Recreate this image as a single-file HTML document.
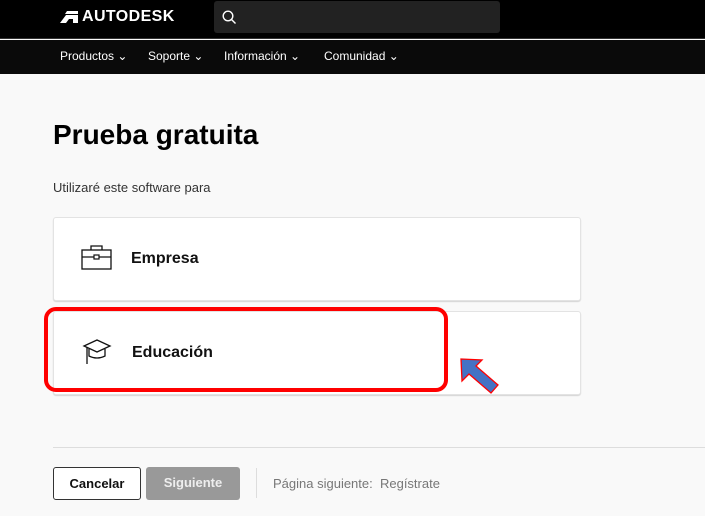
<!DOCTYPE html>
<html><head><meta charset="utf-8"><style>
*{margin:0;padding:0;box-sizing:border-box}
body{width:705px;height:516px;overflow:hidden;background:#f9f9f9;font-family:"Liberation Sans","DejaVu Sans",sans-serif;position:relative}
.top{position:absolute;left:0;top:0;width:705px;height:39px;background:#000;border-bottom:1px solid #333}
.nav{position:absolute;left:0;top:40px;width:705px;height:34px;background:#0a0a0a}
.nav span{position:absolute;top:9px;color:#fff;font-size:12px}
.search{position:absolute;left:214px;top:1px;width:286px;height:32px;background:#222;border-radius:3px}
.card{position:absolute;left:53px;width:528px;height:84px;background:#fff;border:1px solid #e3e3e3;border-radius:3px;box-shadow:0 1px 1px rgba(0,0,0,.15)}
.card span{position:absolute;left:77px;top:32px;font-size:16px;font-weight:bold;color:#111}
.btn{position:absolute;top:467px;height:33px;border-radius:3px;font-size:13px;font-weight:bold;text-align:center;line-height:31px}
</style></head><body>
<div class="top">
<svg style="position:absolute;left:60px;top:11px" width="18" height="12" viewBox="0 0 18 12"><path d="M0 12 L6 4 L18 4 L18 12 L13 12 L13 8 L9 8 L6 12Z M7 0 L18 0 L18 3 L5 3Z" fill="#fff"/></svg>
<div style="position:absolute;left:82px;top:8px;color:#fff;font-weight:bold;font-size:16px;letter-spacing:0.4px">AUTODESK</div>
<div class="search"><svg style="position:absolute;left:8px;top:9px" width="15" height="15" viewBox="0 0 15 15"><circle cx="6" cy="6" r="4.8" fill="none" stroke="#fff" stroke-width="1.4"/><path d="M9.5 9.5 L13.5 13.5" stroke="#fff" stroke-width="1.4"/></svg></div>
</div>
<div class="nav">
<span style="left:60px">Productos ⌄</span>
<span style="left:148px">Soporte ⌄</span>
<span style="left:224px">Información ⌄</span>
<span style="left:324px">Comunidad ⌄</span>
</div>
<div style="position:absolute;left:53px;top:119px;font-size:28px;font-weight:bold;color:#000">Prueba gratuita</div>
<div style="position:absolute;left:53px;top:180px;font-size:13px;color:#333">Utilizaré este software para</div>
<div class="card" style="top:217px">
<svg style="position:absolute;left:27px;top:27px" width="32" height="26" viewBox="0 0 32 26"><rect x="1" y="5" width="29" height="19" fill="none" stroke="#111" stroke-width="1.3"/><path d="M10 5 V1 H21 V5 M1 12 H30" fill="none" stroke="#111" stroke-width="1.3"/><rect x="13" y="10" width="5" height="4" fill="#fff" stroke="#111" stroke-width="1.2"/></svg>
<span>Empresa</span></div>
<div class="card" style="top:311px">
<svg style="position:absolute;left:28px;top:26px" width="32" height="28" viewBox="0 0 32 28"><path d="M2 8 L15 2 L28 8 L15 14Z" fill="none" stroke="#111" stroke-width="1.3"/><path d="M7 11 V18 Q15 22 23 18 V11 M5 9 V26" fill="none" stroke="#111" stroke-width="1.3"/></svg>
<span style="left:78px">Educación</span></div>
<div style="position:absolute;left:44px;top:307px;width:404px;height:85px;border:4px solid #f00;border-radius:12px"></div>
<svg style="position:absolute;left:458px;top:356px" width="44" height="40" viewBox="0 0 44 40"><path d="M3 3 L24 4 L18 10 L40 29 L33 37 L11 18 L4 25Z" fill="#4472c4" stroke="#f00" stroke-width="1.3"/></svg>
<div style="position:absolute;left:53px;top:447px;width:652px;height:1px;background:#ddd"></div>
<div class="btn" style="left:53px;width:88px;border:1px solid #333;background:#fff;color:#111">Cancelar</div>
<div class="btn" style="left:146px;width:94px;background:#999;color:#eee">Siguiente</div>
<div style="position:absolute;left:256px;top:468px;width:1px;height:30px;background:#ddd"></div>
<div style="position:absolute;left:273px;top:476px;font-size:13px;color:#777">Página siguiente:&nbsp; Regístrate</div>
</body></html>
